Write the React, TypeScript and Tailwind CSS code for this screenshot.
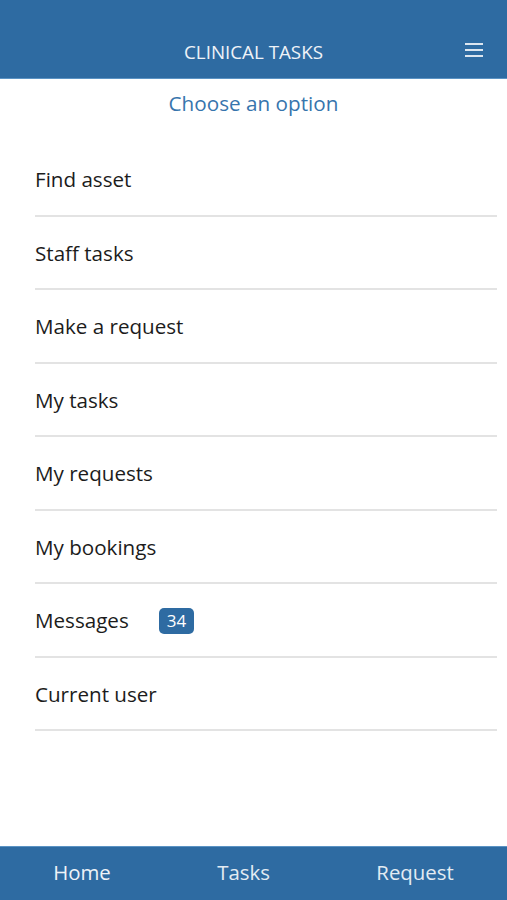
import { useState } from 'react';

const options = [
  { label: 'Find asset' },
  { label: 'Staff tasks' },
  { label: 'Make a request' },
  { label: 'My tasks' },
  { label: 'My requests' },
  { label: 'My bookings' },
  { label: 'Messages', badge: 34 },
  { label: 'Current user' },
];

const App = () => {
  const [tab, setTab] = useState('Home');

  return (
    <div className="flex h-[900px] w-full flex-col bg-white font-['Open_Sans',sans-serif]">
      {/* Header */}
      <header className="relative flex h-[79px] shrink-0 items-end justify-center border-b border-[#5b93c4] bg-[#2e6ba2] pb-[13px]">
        <h1 className="text-[18.8px] leading-[26px] text-[#eef3f8]">CLINICAL TASKS</h1>
        <button className="absolute right-[24px] bottom-[21px] flex flex-col gap-[4px]">
          <span className="block h-[2px] w-[18px] bg-[#dce6f0]" />
          <span className="block h-[2px] w-[18px] bg-[#dce6f0]" />
          <span className="block h-[2px] w-[18px] bg-[#dce6f0]" />
        </button>
      </header>

      <main className="flex-1">
        <p className="pt-[10px] text-center text-[20.7px] leading-[28px] text-[#3775ad]">Choose an option</p>

        <ul className="mt-[26px] pl-[35px] pr-[10px]">
          {options.map((o) => (
            <li
              key={o.label}
              className="flex h-[73.5px] items-center gap-[30px] border-b-2 border-[#e3e3e3] pt-[2px] text-[20.6px] text-[#1c1c1c]"
            >
              <span>{o.label}</span>
              {o.badge && (
                <span className="rounded-[5px] bg-[#2e6ba2] px-[8px] py-[1px] text-[17px] leading-[24px] text-white">
                  {o.badge}
                </span>
              )}
            </li>
          ))}
        </ul>
      </main>

      {/* Bottom nav */}
      <nav className="flex h-[54px] shrink-0 items-center justify-around border-t border-[#5b93c4] bg-[#2e6ba2] pb-[2px]">
        {['Home', 'Tasks', 'Request'].map((t) => (
          <button
            key={t}
            onClick={() => setTab(t)}
            className={`text-[20.4px] ${tab === t ? 'text-[#eef3f8]' : 'text-[#e3ebf3]'}`}
          >
            {t}
          </button>
        ))}
      </nav>
    </div>
  );
};

export default App;
